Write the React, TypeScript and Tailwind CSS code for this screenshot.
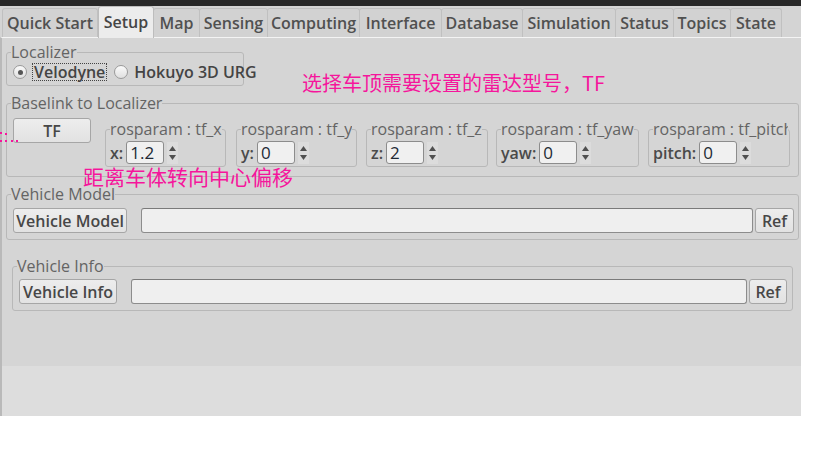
import React from "react";

const tabs: { label: string; cls: string; active?: boolean }[] = [
  { label: "Quick Start", cls: "w-[96px]" },
  { label: "Setup", cls: "w-[56px]", active: true },
  { label: "Map", cls: "w-[47px]" },
  { label: "Sensing", cls: "w-[69px]" },
  { label: "Computing", cls: "w-[93px]" },
  { label: "Interface", cls: "w-[83px]" },
  { label: "Database", cls: "w-[82px]" },
  { label: "Simulation", cls: "w-[94px]" },
  { label: "Status", cls: "w-[59px]" },
  { label: "Topics", cls: "w-[58px]" },
  { label: "State", cls: "w-[52px]" },
];

function Group({
  title,
  className,
  children,
}: {
  title: string;
  className: string;
  children: React.ReactNode;
}) {
  return (
    <fieldset className={`border border-[#b8b8b8] rounded-[3px] min-w-0 ${className}`}>
      <legend className="ml-[4px] px-0 text-[16px] leading-[20px] text-[#646464] whitespace-nowrap">
        {title}
      </legend>
      {children}
    </fieldset>
  );
}

function Btn({ label, className }: { label: string; className: string }) {
  return (
    <div
      className={`h-[25px] flex items-center justify-center rounded-[3px] border border-[#a6a6a6] bg-gradient-to-b from-[#ededed] to-[#e2e2e2] text-[16px] font-semibold text-[#474747] whitespace-nowrap ${className}`}
    >
      {label}
    </div>
  );
}

function Field({ className }: { className: string }) {
  return (
    <div
      className={`h-[25px] rounded-[3px] border border-[#8c8c8c] border-t-[#7a7a7a] bg-[#efefef] ${className}`}
    />
  );
}

function Spin({
  title,
  label,
  value,
  className,
}: {
  title: string;
  label: string;
  value: string;
  className: string;
}) {
  return (
    <fieldset className={`border border-[#b8b8b8] rounded-[3px] min-w-0 ${className}`}>
      <legend className="ml-[4px] px-0 text-[16px] leading-[20px] text-[#646464] whitespace-nowrap max-w-[calc(100%-5px)] overflow-hidden">
        {title}
      </legend>
      <div className="flex items-center pl-[4px] pt-[2px] pb-[2px]">
        <span className="text-[16px] font-semibold text-[#4a4a4a] leading-[22px] whitespace-nowrap">{label}</span>
        <div className="ml-[3px] w-[38px] h-[23px] rounded-[3px] border border-[#8c8c8c] bg-[#f0f0f0] flex items-center pl-[3px] text-[17px] text-[#222a35] leading-none">
          {value}
        </div>
        <div className="ml-[3px] w-[11px] h-[22px] bg-[#dcdcdc] flex flex-col items-center justify-center gap-[4px]">
          <svg width="7" height="5" viewBox="0 0 7 5">
            <path d="M3.5 0 L7 5 L0 5 Z" fill="#505050" />
          </svg>
          <svg width="7" height="5" viewBox="0 0 7 5">
            <path d="M0 0 L7 0 L3.5 5 Z" fill="#505050" />
          </svg>
        </div>
      </div>
    </fieldset>
  );
}

export default function App() {
  return (
    <div
      className="relative w-[818px] h-[467px] bg-white overflow-hidden"
      style={{ fontFamily: '"Open Sans", "Noto Sans", sans-serif' }}
    >
      <div className="w-[801px] flex flex-col">
        <div className="h-[6px] bg-[#282828]" />
        <div className="h-[31px] bg-[#d4d4d4] flex items-end pl-[2px]">
          {tabs.map((t) => (
            <div
              key={t.label}
              className={
                t.active
                  ? `${t.cls} h-[32px] -mb-px relative z-10 flex items-center justify-center rounded-t-[3px] border border-b-0 border-[#bdbdbd] bg-[#ececec] text-[16px] font-semibold text-[#454545] pb-[2px] whitespace-nowrap`
                  : `${t.cls} h-[29px] -ml-px first:ml-0 flex items-center justify-center rounded-t-[3px] border border-b-0 border-[#c0c0c0] bg-[#d2d2d2] text-[16px] font-semibold text-[#505050] whitespace-nowrap`
              }
            >
              {t.label}
            </div>
          ))}
        </div>
        <div className="border-t border-[#f4f4f4] border-l-2 border-l-[#b9b9b9]">
          <div className="h-[328px] bg-[#d5d5d5] flex flex-col">
            <Group title="Localizer" className="mt-[4px] ml-[4px] w-[238px]">
              <div className="flex items-center pl-[6px] pt-[1px] pb-[4px] whitespace-nowrap">
                <div className="w-[14px] h-[14px] shrink-0 rounded-full border border-[#9a9a9a] bg-gradient-to-b from-[#fafafa] to-[#e0e0e0] flex items-center justify-center">
                  <div className="w-[5px] h-[5px] rounded-full bg-[#555]" />
                </div>
                <div className="ml-[5px] h-[18px] border border-dotted border-[#444] flex items-center px-px text-[16px] font-semibold text-[#444]">
                  Velodyne
                </div>
                <div className="ml-[7px] w-[14px] h-[14px] shrink-0 rounded-full border border-[#9a9a9a] bg-gradient-to-b from-[#fafafa] to-[#e0e0e0]" />
                <div className="ml-[6px] text-[16px] font-semibold text-[#444] leading-[18px]">Hokuyo 3D URG</div>
              </div>
            </Group>

            <Group title="Baselink to Localizer" className="mt-[7px] ml-[4px] w-[793px]">
              <div className="flex items-start pl-[6px] pt-[5px] pb-[9px]">
                <Btn label="TF" className="w-[78px] shrink-0" />
                <Spin title="rosparam : tf_x" label="x:" value="1.2" className="mt-[1px] ml-[14px] w-[121px] shrink-0" />
                <Spin title="rosparam : tf_y" label="y:" value="0" className="mt-[1px] ml-[10px] w-[121px] shrink-0" />
                <Spin title="rosparam : tf_z" label="z:" value="2" className="mt-[1px] ml-[9px] w-[122px] shrink-0" />
                <Spin title="rosparam : tf_yaw" label="yaw:" value="0" className="mt-[1px] ml-[8px] w-[143px] shrink-0" />
                <Spin title="rosparam : tf_pitch" label="pitch:" value="0" className="mt-[1px] ml-[9px] w-[142px] shrink-0" />
              </div>
            </Group>

            <Group title="Vehicle Model" className="mt-[7px] ml-[4px] w-[793px]">
              <div className="flex items-center pl-[6px] pr-[4px] pt-[4px] pb-[6px]">
                <Btn label="Vehicle Model" className="w-[114px] shrink-0" />
                <Field className="ml-[14px] flex-1" />
                <Btn label="Ref" className="ml-[2px] w-[39px] shrink-0" />
              </div>
            </Group>

            <Group title="Vehicle Info" className="mt-[16px] ml-[10px] w-[781px]">
              <div className="flex items-center pl-[6px] pr-[5px] pt-[3px] pb-[6px]">
                <Btn label="Vehicle Info" className="w-[98px] shrink-0" />
                <Field className="ml-[14px] flex-1" />
                <Btn label="Ref" className="ml-[2px] w-[38px] shrink-0" />
              </div>
            </Group>
          </div>
          <div className="h-[50px] bg-[#dddddd]" />
        </div>
      </div>

      {/* annotations drawn over the screenshot */}
      <div
        className="absolute left-[302px] top-[72px] text-[20px] leading-[22px] text-[#f5169c] whitespace-nowrap"
        style={{ fontFamily: '"Noto Sans CJK SC", "Noto Sans", sans-serif' }}
      >
        选择车顶需要设置的雷达型号，TF
      </div>
      <div
        className="absolute left-[83px] top-[166px] text-[21px] leading-[20px] text-[#f5169c] whitespace-nowrap"
        style={{ fontFamily: '"Noto Sans CJK SC", "Noto Sans", sans-serif' }}
      >
        距离车体转向中心偏移
      </div>
      <svg className="absolute left-0 top-[131px]" width="20" height="12" viewBox="0 0 20 12">
        <rect x="0" y="1" width="2" height="2" fill="#f5169c" />
        <rect x="5" y="2" width="2" height="2" fill="#f5169c" />
        <rect x="0" y="9" width="2" height="2" fill="#f5169c" />
        <rect x="5" y="9" width="2" height="2" fill="#f5169c" />
        <rect x="11" y="9" width="2" height="2" fill="#f5169c" />
        <rect x="16" y="9" width="2" height="2" fill="#f5169c" />
      </svg>
    </div>
  );
}
